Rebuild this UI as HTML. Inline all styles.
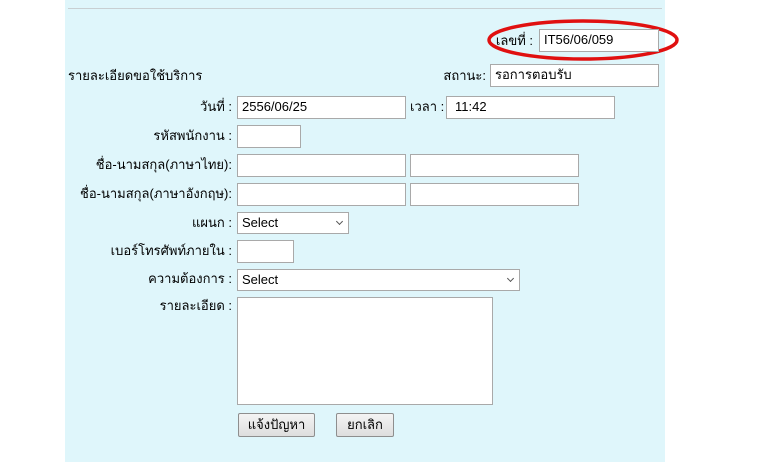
<!DOCTYPE html>
<html><head><meta charset="utf-8"><style>
body{margin:0;width:761px;height:472px;background:#fff;position:relative;font-family:"Liberation Sans",Tahoma,sans-serif;font-size:13px;color:#000;overflow:hidden}
.panel{position:absolute;left:65px;top:0;width:600px;height:462px;background:#dff6fb}
.hr{position:absolute;left:68px;top:8px;width:594px;height:1px;background:#c8cfd2}
.a{position:absolute}
.lbl{position:absolute;text-align:right;white-space:nowrap;line-height:22px}
.in{position:absolute;background:#fff;border:1px solid #a9a9a9;box-sizing:border-box;padding-left:4px;line-height:20px;font-size:13px;white-space:nowrap}
.sel{position:absolute;background:#fff;border:1px solid #a9a9a9;box-sizing:border-box;padding-left:4px;line-height:19px;font-size:13px}
.sel:after{content:"";position:absolute;right:6px;top:6px;width:4px;height:4px;border-right:1.5px solid #555;border-bottom:1.5px solid #555;transform:rotate(45deg)}
.btn{position:absolute;background:linear-gradient(#f4f4f4,#dedede);border:1px solid #8e8e8e;box-sizing:border-box;text-align:center;line-height:21px;border-radius:2px}
</style></head><body>
<div class="panel"></div>
<div class="hr"></div>
<svg class="a" style="left:0;top:0" width="761" height="472"><ellipse cx="583" cy="40" rx="94" ry="19" fill="none" stroke="#e01010" stroke-width="3.5"/></svg>
<div class="lbl" style="right:228px;top:30px">เลขที่ :</div>
<div class="in" style="left:539px;top:29px;width:120px;height:23px">IT56/06/059</div>
<div class="lbl" style="left:68px;top:65px">รายละเอียดขอใช้บริการ</div>
<div class="lbl" style="right:275px;top:65px">สถานะ:</div>
<div class="in" style="left:490px;top:64px;width:169px;height:23px">รอการตอบรับ</div>
<div class="lbl" style="right:529px;top:96px">วันที่ :</div>
<div class="in" style="left:237px;top:96px;width:169px;height:23px">2556/06/25</div>
<div class="lbl" style="left:410px;top:96px">เวลา :</div>
<div class="in" style="left:446px;top:96px;width:169px;height:23px;padding-left:8px">11:42</div>
<div class="lbl" style="right:529px;top:125px">รหัสพนักงาน :</div>
<div class="in" style="left:237px;top:125px;width:64px;height:23px"></div>
<div class="lbl" style="right:529px;top:154px">ชื่อ-นามสกุล(ภาษาไทย):</div>
<div class="in" style="left:237px;top:154px;width:169px;height:23px"></div>
<div class="in" style="left:410px;top:154px;width:169px;height:23px"></div>
<div class="lbl" style="right:529px;top:183px">ชื่อ-นามสกุล(ภาษาอังกฤษ):</div>
<div class="in" style="left:237px;top:183px;width:169px;height:23px"></div>
<div class="in" style="left:410px;top:183px;width:169px;height:23px"></div>
<div class="lbl" style="right:529px;top:212px">แผนก :</div>
<div class="sel" style="left:237px;top:212px;width:112px;height:22px">Select</div>
<div class="lbl" style="right:529px;top:240px">เบอร์โทรศัพท์ภายใน :</div>
<div class="in" style="left:237px;top:240px;width:57px;height:23px"></div>
<div class="lbl" style="right:529px;top:268px">ความต้องการ :</div>
<div class="sel" style="left:237px;top:269px;width:283px;height:22px">Select</div>
<div class="lbl" style="right:529px;top:295px">รายละเอียด :</div>
<div class="in" style="left:237px;top:297px;width:256px;height:108px"></div>
<div class="btn" style="left:238px;top:413px;width:77px;height:24px">แจ้งปัญหา</div>
<div class="btn" style="left:336px;top:413px;width:58px;height:24px">ยกเลิก</div>
</body></html>
